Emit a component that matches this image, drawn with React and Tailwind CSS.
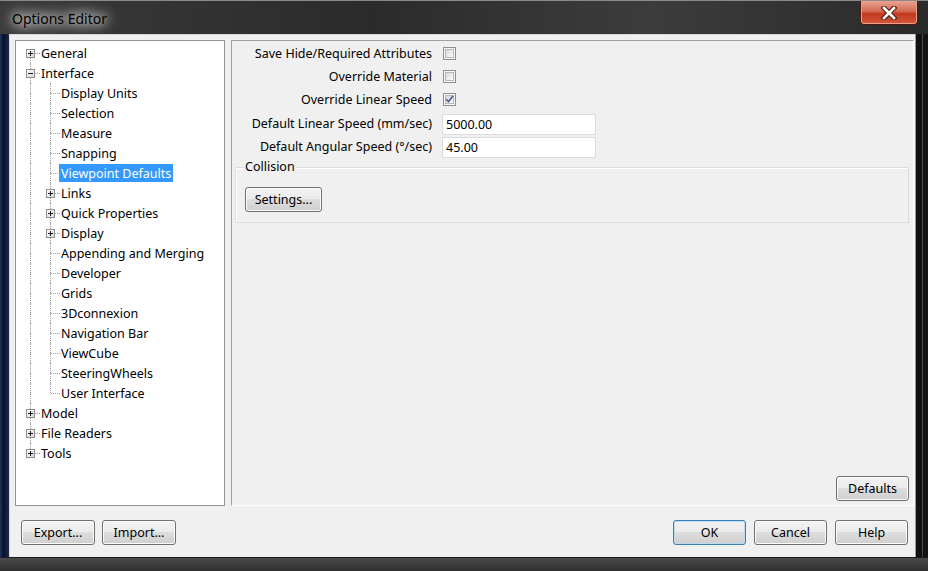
import React from "react";

const tree = [
  { label: "General", level: 0, box: "+", first: true },
  { label: "Interface", level: 0, box: "-" },
  { label: "Display Units", level: 1 },
  { label: "Selection", level: 1 },
  { label: "Measure", level: 1 },
  { label: "Snapping", level: 1 },
  { label: "Viewpoint Defaults", level: 1, selected: true },
  { label: "Links", level: 1, box: "+" },
  { label: "Quick Properties", level: 1, box: "+" },
  { label: "Display", level: 1, box: "+" },
  { label: "Appending and Merging", level: 1 },
  { label: "Developer", level: 1 },
  { label: "Grids", level: 1 },
  { label: "3Dconnexion", level: 1 },
  { label: "Navigation Bar", level: 1 },
  { label: "ViewCube", level: 1 },
  { label: "SteeringWheels", level: 1 },
  { label: "User Interface", level: 1, lastChild: true },
  { label: "Model", level: 0, box: "+" },
  { label: "File Readers", level: 0, box: "+" },
  { label: "Tools", level: 0, box: "+", last: true },
];

function Expander({ sign }) {
  return (
    <svg className="absolute left-[6px] top-[6px]" width="9" height="9" viewBox="0 0 9 9">
      <defs>
        <linearGradient id="expfill" x1="0" y1="0" x2="1" y2="1">
          <stop offset="0" stopColor="#ffffff" />
          <stop offset="1" stopColor="#d4d4d4" />
        </linearGradient>
      </defs>
      <rect x="0.5" y="0.5" width="8" height="8" fill="url(#expfill)" stroke="#8f8f8f" />
      <path d="M2 4.5h5" stroke="#1e1e1e" />
      {sign === "+" && <path d="M4.5 2v5" stroke="#1e1e1e" />}
    </svg>
  );
}

function Cell({ up, down, dash, box }) {
  return (
    <div className="relative h-[20px] w-[20px] shrink-0">
      {up && <span className="absolute left-[10px] top-0 h-[10px] border-l border-dotted border-[#a0a0a0]" />}
      {down && <span className="absolute left-[10px] top-[10px] bottom-0 border-l border-dotted border-[#a0a0a0]" />}
      {dash && <span className="absolute left-[11px] top-[10px] w-[9px] border-t border-dotted border-[#a0a0a0]" />}
      {box && <Expander sign={box} />}
    </div>
  );
}

function TreeRow({ item }) {
  return (
    <div className="flex h-[20px] items-center">
      {item.level === 0 ? (
        <Cell up={!item.first} down={!item.last} dash box={item.box} />
      ) : (
        <>
          <Cell up down />
          <Cell up down={!item.lastChild} dash box={item.box} />
        </>
      )}
      <span
        className={`-ml-px h-[18px] whitespace-nowrap px-[2px] pt-px leading-[18px] ${
          item.selected ? "bg-[#3399ff] text-white" : "text-black"
        }`}
      >
        {item.label}
      </span>
    </div>
  );
}

function Button({ children, primary, className = "" }) {
  return (
    <button
      className={`h-[25px] rounded-[3px] border bg-[linear-gradient(#f2f2f2_0%,#ebebeb_50%,#dddddd_50%,#cfcfcf_100%)] pt-px text-[12.5px] text-black ${
        primary
          ? "border-[#3c7fb1] shadow-[inset_0_0_0_1px_#b7dcf3]"
          : "border-[#707070] shadow-[inset_0_0_0_1px_#fbfbfb]"
      } ${className}`}
    >
      {children}
    </button>
  );
}

function Checkbox({ checked }) {
  return (
    <svg width="13" height="13" viewBox="0 0 13 13" className="ml-px">
      <defs>
        <linearGradient id="cbfill" x1="0" y1="0" x2="1" y2="1">
          <stop offset="0" stopColor="#d6d6d6" />
          <stop offset="1" stopColor="#ffffff" />
        </linearGradient>
      </defs>
      <rect x="0.5" y="0.5" width="12" height="12" fill="#f6f6f6" stroke="#8e8f8f" />
      <rect x="2.5" y="2.5" width="8" height="8" fill="url(#cbfill)" stroke="#b7b7b7" />
      {checked && (
        <path d="M3.5 6.5l2 2.2 4-5.2" fill="none" stroke="#4a5f97" strokeWidth="1.6" strokeLinecap="round" strokeLinejoin="round" />
      )}
    </svg>
  );
}

function CheckRow({ label, checked }) {
  return (
    <div className="flex h-[23px] items-center">
      <span className="w-[200px] whitespace-nowrap pt-px text-right">{label}</span>
      <div className="ml-[10px] flex items-center">
        <Checkbox checked={checked} />
      </div>
    </div>
  );
}

function InputRow({ label, value, className = "" }) {
  return (
    <div className={`flex h-[21px] items-center ${className}`}>
      <span className="w-[200px] whitespace-nowrap text-right">{label}</span>
      <div className="ml-[10px] flex h-[21px] w-[154px] items-center border border-[#dcdcdc] bg-white pl-[3px] pt-px">
        {value}
      </div>
    </div>
  );
}

export default function App() {
  return (
    <div className="flex h-[571px] w-[928px] flex-col overflow-hidden bg-[linear-gradient(90deg,#3a3a3a_0%,#2b2b2b_40%,#3c3c3c_70%,#2a2a2a_100%)] font-['Noto_Sans',sans-serif] text-[12.5px] text-black">
      {/* Title bar */}
      <div className="flex h-[34px] shrink-0 items-start border-t border-[#8a8a8a]">
        <span className="pl-[12px] pt-[8px] text-[14px] leading-[20px] text-black [text-shadow:0_0_8px_#ffffff,0_0_14px_#ffffff,0_0_20px_#dddddd]">
          Options Editor
        </span>
        <div className="ml-auto mr-[10px] flex h-[24px] w-[58px] items-center justify-center rounded-b-[4px] border border-t-0 border-[#4a1a10] bg-[linear-gradient(#e8a594_0%,#d46a52_45%,#c23a20_55%,#d2583a_100%)] shadow-[inset_0_0_0_1px_#eba08c]">
          <svg width="18" height="14" viewBox="0 0 18 14">
            <path d="M4 2l10 10M14 2L4 12" stroke="#5a2418" strokeWidth="5" strokeLinecap="square" />
            <path d="M4 2l10 10M14 2L4 12" stroke="#ffffff" strokeWidth="2.6" strokeLinecap="square" />
          </svg>
        </div>
      </div>

      <div className="flex h-[523px] shrink-0">
        <div className="w-[9px] shrink-0 bg-[linear-gradient(90deg,#1b3466_0%,#0c1020_40%,#1b2a52_100%)]" />

        {/* Client */}
        <div className="flex w-[906px] shrink-0 flex-col border-l border-t border-[#d8d8d8] bg-[#f0f0f0]">
          <div className="flex gap-[6px] pl-[5px] pr-[1px] pt-[5px]">
            {/* Tree */}
            <div className="h-[466px] w-[210px] shrink-0 border border-[#8f939a] bg-white pl-[4px] pt-[2px]">
              {tree.map((item) => (
                <TreeRow key={item.label} item={item} />
              ))}
            </div>

            {/* Settings panel */}
            <div className="flex h-[466px] flex-1 flex-col border border-b-white border-l-[#a0a0a0] border-r-white border-t-[#a0a0a0]">
              <div className="mt-px">
                <CheckRow label="Save Hide/Required Attributes" />
                <CheckRow label="Override Material" />
                <CheckRow label="Override Linear Speed" checked />
                <InputRow label="Default Linear Speed (mm/sec)" value="5000.00" className="mt-[3px]" />
                <InputRow label="Default Angular Speed (°/sec)" value="45.00" className="mt-[2px]" />
              </div>

              <div className="relative ml-[3px] mr-[4px] mt-[9px] border border-[#dcdcdc] pb-[10px] pl-[9px] pt-[19px] shadow-[inset_1px_1px_0_#ffffff]">
                <span className="absolute -top-[10px] left-[8px] bg-[#f0f0f0] px-px leading-[18px]">Collision</span>
                <Button className="w-[77px]">Settings...</Button>
              </div>

              <div className="mt-auto flex justify-end pb-[4px] pr-[4px]">
                <Button className="w-[73px]">Defaults</Button>
              </div>
            </div>
          </div>

          {/* Bottom buttons */}
          <div className="flex items-start pl-[11px] pr-[7px] pt-[14px]">
            <Button className="w-[74px]">Export...</Button>
            <Button className="ml-[7px] w-[74px]">Import...</Button>
            <Button primary className="ml-auto w-[73px]">OK</Button>
            <Button className="ml-[8px] w-[73px]">Cancel</Button>
            <Button className="ml-[8px] w-[73px]">Help</Button>
          </div>
        </div>

        <div className="flex-1 bg-[linear-gradient(90deg,#9a9a9a_0px,#9a9a9a_1px,#111_1px,#111_7px,#4a4a4a_7px,#4a4a4a_8px,#151515_8px)]" />
      </div>

      <div className="h-[14px] shrink-0 border-t border-[#1a1a1a] bg-[linear-gradient(#4a4a4a,#2e2e2e)]" />
    </div>
  );
}
